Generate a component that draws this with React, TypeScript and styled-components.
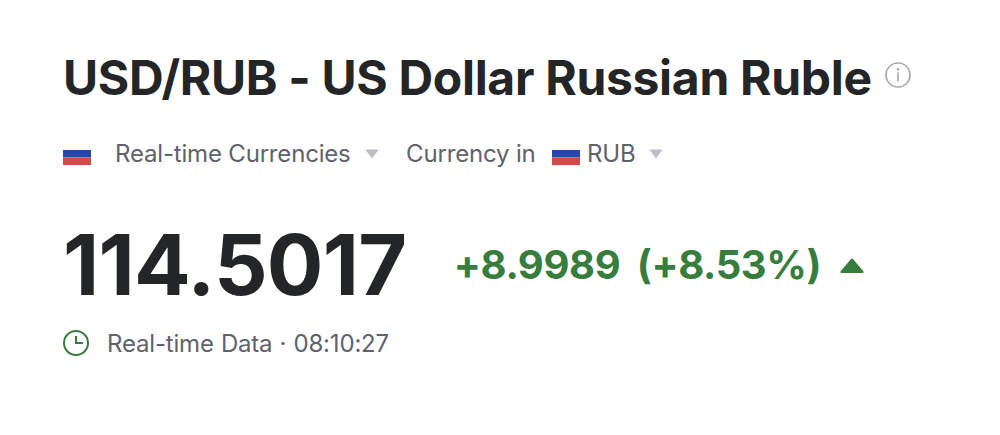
import styled, { createGlobalStyle } from "styled-components"

const GlobalStyle = createGlobalStyle`
  * {
    box-sizing: border-box;
  }

  body {
    margin: 0;
    background-color: #ffffff;
    font-family: Inter, sans-serif;
    color: #232526;
  }
`

const Card = styled.main`
  height: 435px;
  padding: 48px 63px 0;
  white-space: nowrap;
`

const Row = styled.div<{ $height: number, $top?: number }>`
  display: flex;
  align-items: center;
  height: ${p => p.$height}px;
  margin-top: ${p => p.$top || 0}px;
`

const Title = styled.h1`
  margin: 0;
  font-size: 48px;
  line-height: 60px;
  font-weight: 700;
  letter-spacing: -0.31px;
`

const InfoIcon = styled.svg`
  width: 26px;
  height: 26px;
  margin: -6px 0 0 13px;
`

const Label = styled.span<{ $left?: number }>`
  margin-left: ${p => p.$left || 0}px;
  font-size: 24px;
  line-height: 32px;
  letter-spacing: -0.18px;
  color: #5f626b;
`

const Timestamp = styled(Label)`
  padding-top: 2px;
  word-spacing: 0.6px;
`

const Flag = styled.svg<{ $left?: number }>`
  width: 28px;
  height: 22px;
  margin-left: ${p => p.$left || 0}px;
`

const Caret = styled.svg<{ $left: number }>`
  width: 14px;
  height: 10px;
  margin-left: ${p => p.$left}px;
`

const Price = styled.div`
  font-size: 84px;
  line-height: 84px;
  font-weight: 700;
  letter-spacing: -0.75px;
`

const Change = styled.span<{ $left: number }>`
  margin-left: ${p => p.$left}px;
  font-size: 40px;
  line-height: 48px;
  font-weight: 700;
  letter-spacing: -0.4px;
  color: #377d3d;
`

const UpArrow = styled.svg`
  width: 24px;
  height: 15px;
  margin-left: 19px;
`

const ClockIcon = styled.svg`
  width: 26px;
  height: 26px;
`

const RussianFlag = ({ left }: { left?: number }) => (
  <Flag viewBox="0 0 28 22" $left={left}>
    <path fill="#fdfdfd" d="M0 0h28v7H0z" />
    <path fill="#2447ae" d="M0 7h28v7.5H0z" />
    <path fill="#d04c48" d="M0 14.5h28V22H0z" />
  </Flag>
)

const DownCaret = ({ left }: { left: number }) => (
  <Caret viewBox="0 0 14 10" $left={left}>
    <path fill="#bbbdc5" d="M.3.5h13.4L7 9.5z" />
  </Caret>
)

const App = () => (
  <>
    <GlobalStyle />
    <Card>
      <Row $height={60}>
        <Title>USD/RUB - US Dollar Russian Ruble</Title>
        <InfoIcon viewBox="0 0 26 26" fill="none">
          <circle cx="13" cy="13" r="12" stroke="#ababab" strokeWidth="1.7" />
          <path d="M13 10.5v8.8" stroke="#a0a0a0" strokeWidth="1.5" />
          <circle cx="13" cy="7.2" r="1.2" fill="#a0a0a0" />
        </InfoIcon>
      </Row>
      <Row $height={32} $top={30}>
        <RussianFlag />
        <Label $left={24}>Real-time Currencies</Label>
        <DownCaret left={14} />
        <Label $left={27.5}>Currency in</Label>
        <RussianFlag left={16.5} />
        <Label $left={7}>RUB</Label>
        <DownCaret left={13} />
      </Row>
      <Row $height={84} $top={53}>
        <Price>114.5017</Price>
        <Change $left={47.5}>+8.9989</Change>
        <Change $left={16.5}>(+8.53%)</Change>
        <UpArrow viewBox="0 0 24 15">
          <path
            fill="#377d3d"
            stroke="#377d3d"
            strokeWidth="2"
            strokeLinejoin="round"
            d="M1.4 14 12 1.5 22.6 14z"
          />
        </UpArrow>
      </Row>
      <Row $height={32} $top={20}>
        <ClockIcon viewBox="0 0 26 26" fill="none" stroke="#377d3d" strokeWidth="2">
          <circle cx="13" cy="13" r="12" />
          <path d="M13 6v7h7" />
        </ClockIcon>
        <Timestamp $left={18}>Real-time Data · 08:10:27</Timestamp>
      </Row>
    </Card>
  </>
)

export default App
